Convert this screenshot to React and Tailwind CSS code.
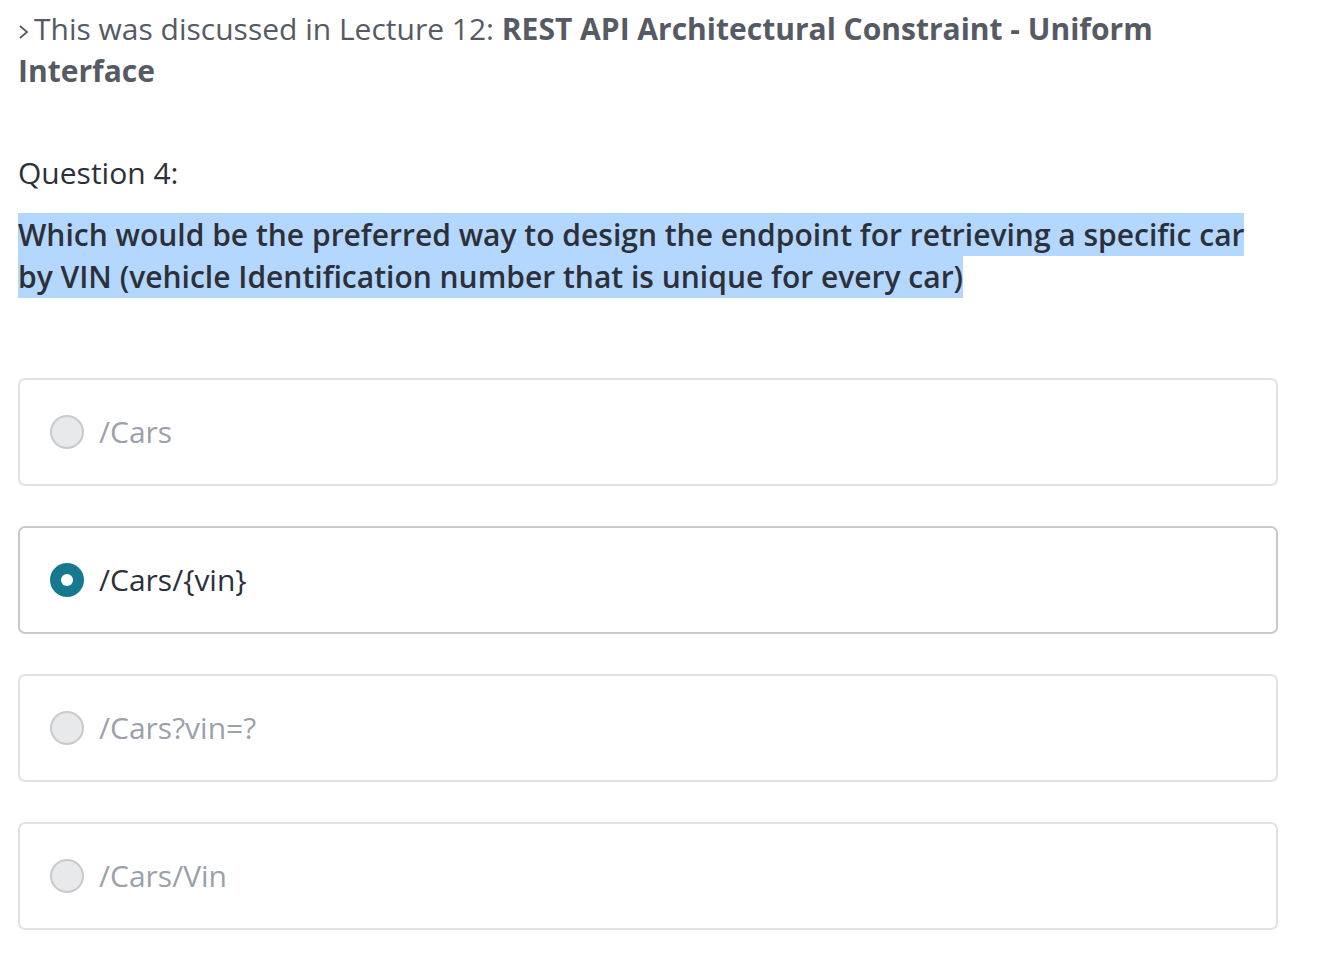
import React from 'react';

const options = [
  { label: '/Cars', selected: false },
  { label: '/Cars/{vin}', selected: true },
  { label: '/Cars?vin=?', selected: false },
  { label: '/Cars/Vin', selected: false },
];

const Radio = ({ selected }) =>
  selected ? (
    <span className="flex items-center justify-center w-[34px] h-[34px] rounded-full bg-[#16798f] shrink-0">
      <span className="w-[12px] h-[12px] rounded-full bg-white" />
    </span>
  ) : (
    <span className="w-[34px] h-[34px] rounded-full bg-[#e8e9eb] border-2 border-[#c9cacd] shrink-0" />
  );

const App = () => {
  return (
    <div className="min-h-screen bg-white font-['Open_Sans',sans-serif] text-[30px] leading-[42px]">
      <div className="w-[1260px] ml-[18px] pt-[8px]">
        <p className="text-[#555a64]">
          <svg className="inline-block w-[14px] h-[18px] mr-[4px] -ml-[2px] align-[-1px]" viewBox="0 0 14 18" fill="none">
            <polyline points="4,3 11,9 4,15" stroke="#555a64" strokeWidth="1.8" />
          </svg>
          This was discussed in Lecture 12: <span className="font-bold">REST API Architectural Constraint - Uniform Interface</span>
        </p>

        <p className="mt-[60px] text-[#2d3039]">Question 4:</p>

        <p className="mt-[20px] text-[#2d3039] font-semibold">
          <span className="bg-[#b3d7fe] py-[1px]">
            Which would be the preferred way to design the endpoint for retrieving a specific car by VIN (vehicle Identification number that is unique for every car)
          </span>
        </p>

        <div className="mt-[80px] flex flex-col gap-[40px]">
          {options.map((o) => (
            <label
              key={o.label}
              className={`flex items-center gap-[15px] h-[108px] px-[30px] rounded-[7px] border-2 ${
                o.selected ? 'border-[#c9c9c9]' : 'border-[#e2e2e2]'
              }`}
            >
              <Radio selected={o.selected} />
              <span className={o.selected ? 'text-[#2d3039]' : 'text-[#9ba1ac]'}>{o.label}</span>
            </label>
          ))}
        </div>
      </div>
    </div>
  );
};

export default App;
